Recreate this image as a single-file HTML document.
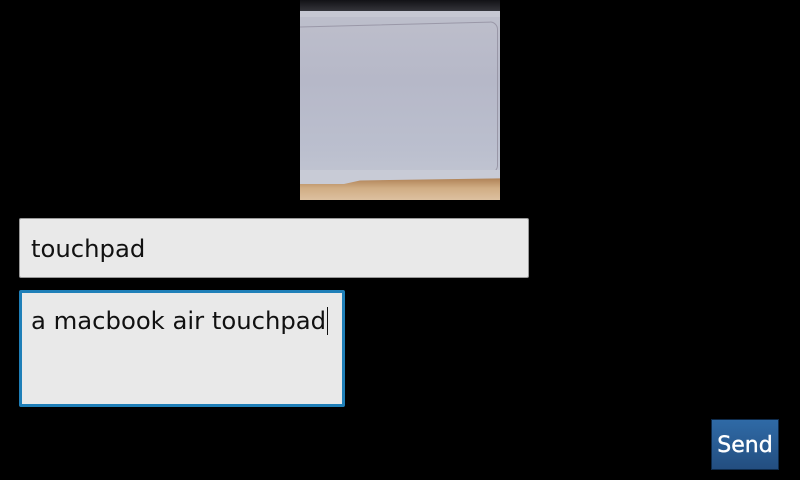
<!DOCTYPE html>
<html><head><style>
body{margin:0;width:800px;height:480px;background:#000;position:relative;overflow:hidden;font-family:"DejaVu Sans","Liberation Sans",sans-serif}
.img{position:absolute;left:300px;top:0;width:200px;height:200px;background:linear-gradient(180deg,#bfc0cc 0%,#b6b8c8 40%,#bbbfce 75%,#c6c9d4 100%);overflow:hidden}
.top{position:absolute;left:0;top:0;width:200px;height:11px;background:linear-gradient(180deg,#121216,#35353b)}
.rim{position:absolute;left:0;top:11px;width:200px;height:6px;background:#c6c7d2}
.pad{position:absolute;left:-4px;top:24px;width:200px;height:150px;border:1px solid #9a98a8;border-radius:0 8px 8px 0;transform:skewY(-1.5deg)}
.wood{position:absolute;left:0;top:176px;width:200px;height:24px;background:linear-gradient(180deg,#a8784c,#d0ad84 50%,#dcc0a0)}
.woodtop{position:absolute;left:0;top:170px;width:200px;height:14px;background:#c8cbd6;clip-path:polygon(0 0,100% 0,100% 60%,30% 75%,22% 100%,0 100%)}
.f{position:absolute;background:#e9e9e9;box-sizing:border-box;font-size:24.3px;color:#111}
.f1{left:19px;top:218px;width:510px;height:60px;border:1px solid #999;border-radius:2px;padding:15px 0 0 11px}
.f2{left:19px;top:290px;width:326px;height:117px;border:3px solid #1f7fb8;border-radius:2px;padding:13px 0 0 9px}
.cur{display:inline-block;width:1px;height:28px;background:#111;vertical-align:-6px;margin-left:1px}
.btn{position:absolute;left:711px;top:419px;width:68px;height:51px;box-sizing:border-box;border:1px solid #0e2a4a;background:linear-gradient(180deg,#2f6aa6,#234e80);color:#fff;font-size:22px;text-align:center;line-height:51px;-webkit-text-stroke:0.4px #fff}
</style></head><body>
<div class="img"><div class="top"></div><div class="rim"></div><div class="pad"></div><div class="wood"></div><div class="woodtop"></div></div>
<div class="f f1">touchpad</div>
<div class="f f2">a macbook air touchpad<span class="cur"></span></div>
<div class="btn">Send</div>
</body></html>
